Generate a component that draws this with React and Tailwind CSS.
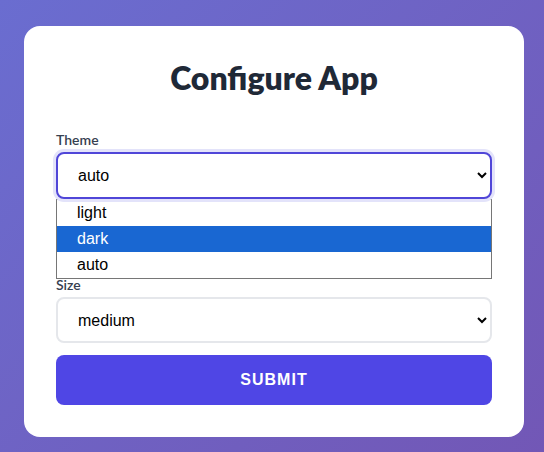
import React, { useState } from 'react';

function App() {
  const [theme, setTheme] = useState('auto');
  const [size, setSize] = useState('medium');
  const options = ['light', 'dark', 'auto'];

  return (
    <div className="min-h-screen bg-linear-135 from-[#6a6dd0] to-[#7257b6] pl-6 pt-[26px] pb-4 font-['Lato',sans-serif]">
      <div className="w-[500px] bg-white rounded-2xl px-8 pt-[34px] pb-8">
        <h1 className="text-[32px] leading-9 font-extrabold text-[#1f2937] text-center mb-[34px]">Configure App</h1>

        <div>
          <label className="block text-sm leading-5 font-semibold text-[#374151] mb-0.5">Theme</label>
          <select
            value={theme}
            onChange={(e) => setTheme(e.target.value)}
            className="w-full h-[47px] px-4 border-2 border-[#5046d8] rounded-lg ring-3 ring-[#e3e3fa] bg-white text-base text-black font-['Liberation_Sans',sans-serif] outline-none"
          >
            {options.map((o) => (
              <option key={o} value={o}>{o}</option>
            ))}
          </select>
          {/* open listbox */}
          <div className="border border-[#767676] bg-white font-['Liberation_Sans',sans-serif] text-base text-black">
            {options.map((o) => (
              <div
                key={o}
                className={`h-[26px] leading-[26px] pl-5 ${o === 'dark' ? 'bg-[#1967d2] text-white' : ''}`}
              >
                {o}
              </div>
            ))}
          </div>
        </div>

        <div className="-mt-1">
          <label className="block text-sm leading-5 font-semibold text-[#374151] mb-0.5">Size</label>
          <select
            value={size}
            onChange={(e) => setSize(e.target.value)}
            className="w-full h-[46px] px-4 border-2 border-[#e5e7eb] rounded-lg bg-white text-base text-black font-['Liberation_Sans',sans-serif] outline-none"
          >
            <option value="small">small</option>
            <option value="medium">medium</option>
            <option value="large">large</option>
          </select>
        </div>

        <button className="mt-3 w-full h-[50px] rounded-lg bg-[#4f46e5] text-white font-bold text-base tracking-[1px] font-['Liberation_Sans',sans-serif]">
          SUBMIT
        </button>
      </div>
    </div>
  );
}

export default App;
